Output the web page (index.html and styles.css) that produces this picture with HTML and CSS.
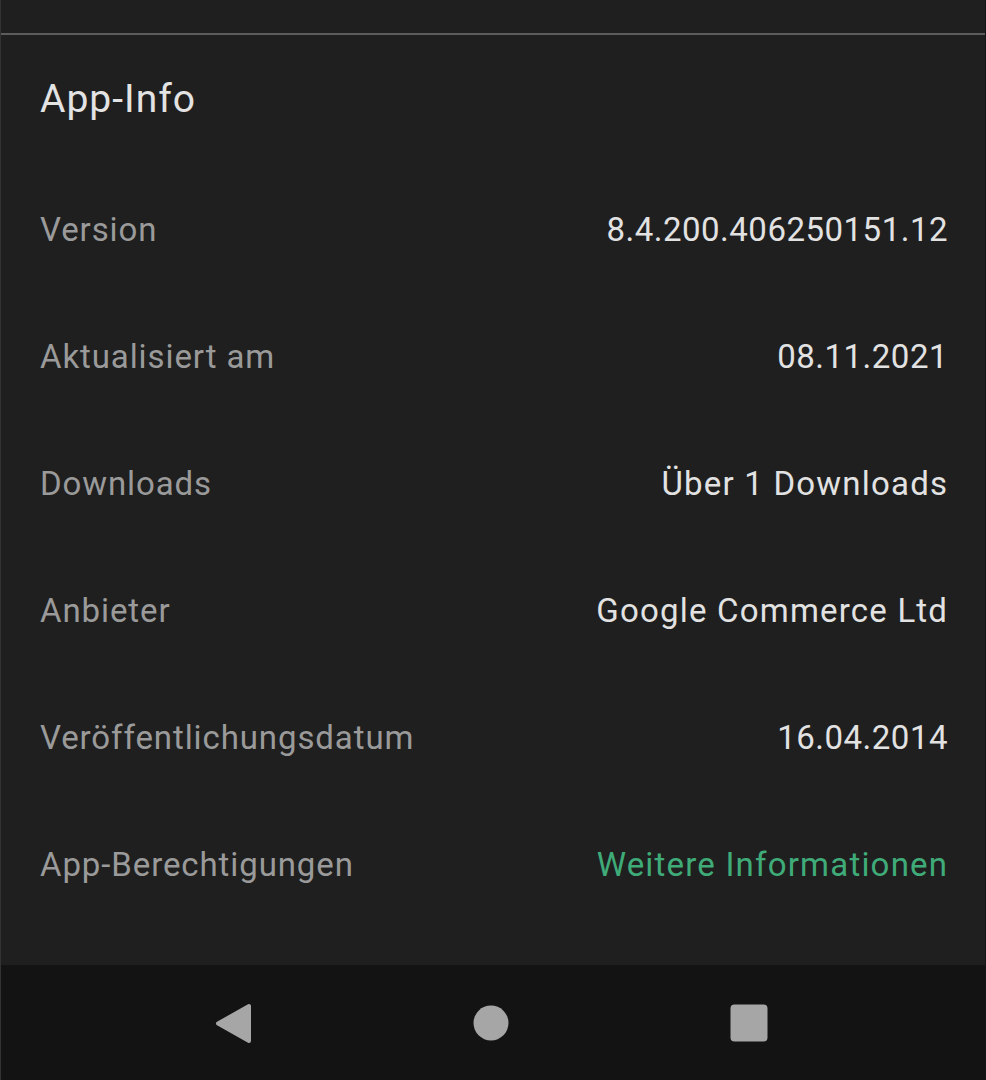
FILE: index.html
```html
<!DOCTYPE html>
<html>
  <head>
    <title>App-Info</title>
    <link rel="stylesheet" href="styles.css">
  </head>
  <body>
    <div class="screen">
      <div class="topbar"></div>
      <div class="divider"></div>

      <!-- app info section -->
      <div class="section">
        <h1 class="title">App-Info</h1>
        <div class="row">
          <span class="label">Version</span>
          <span class="value num">8.4.200.406250151.12</span>
        </div>
        <div class="row">
          <span class="label">Aktualisiert am</span>
          <span class="value num">08.11.2021</span>
        </div>
        <div class="row">
          <span class="label">Downloads</span>
          <span class="value">Über 1 Downloads</span>
        </div>
        <div class="row">
          <span class="label">Anbieter</span>
          <span class="value">Google Commerce Ltd</span>
        </div>
        <div class="row">
          <span class="label">Veröffentlichungsdatum</span>
          <span class="value num">16.04.2014</span>
        </div>
        <div class="row">
          <span class="label">App-Berechtigungen</span>
          <span class="value link">Weitere Informationen</span>
        </div>
      </div>

      <!-- android nav bar -->
      <div class="navbar">
        <svg class="nav-icon" width="40" height="40" viewBox="0 0 40 40">
          <path d="M36 3 L36 38 L5 20.5 Z" fill="#a6a6a6" stroke="#a6a6a6" stroke-width="4" stroke-linejoin="round"/>
        </svg>
        <svg class="nav-icon" width="40" height="40" viewBox="0 0 40 40">
          <circle cx="20" cy="20" r="17.5" fill="#a6a6a6"/>
        </svg>
        <svg class="nav-icon" width="40" height="40" viewBox="0 0 40 40">
          <rect x="1.5" y="1.5" width="37" height="37" rx="4" fill="#a6a6a6"/>
        </svg>
      </div>
    </div>
  </body>
</html>
```

FILE: styles.css
```css
body {
  margin: 0;
  background-color: #1f1f1f;
  font-family: Roboto, 'Noto Sans', sans-serif;
}

.screen {
  display: flex;
  flex-direction: column;
  height: 1080px;
  border-left: 1px solid #333333;
  border-right: 1px solid #151515;
}

.topbar {
  height: 33px;
  background-color: #1f1f1f;
}

.divider {
  height: 2px;
  background-color: #5c5c5c;
}

.section {
  flex: 1;
  padding: 41px 38px 0 39px;
}

.title {
  margin: 0 0 43px 0;
  font-size: 39px;
  line-height: 47px;
  font-weight: 400;
  letter-spacing: 1px;
  color: #e3e3e3;
}

.row {
  display: flex;
  justify-content: space-between;
  height: 127px;
  line-height: 127px;
  font-size: 33px;
  letter-spacing: 0.9px;
}

.label {
  color: #9a9a9a;
}

.value {
  color: #e2e2e2;
  letter-spacing: 1.2px;
  margin-right: -1.2px;
}

.num {
  letter-spacing: 0.5px;
  margin-right: -1px;
}

.link {
  color: #3fab79;
}

.navbar {
  height: 115px;
  background-color: #131313;
  display: flex;
  justify-content: center;
  align-items: center;
  gap: 218px;
  padding-right: 4px;
}
```
